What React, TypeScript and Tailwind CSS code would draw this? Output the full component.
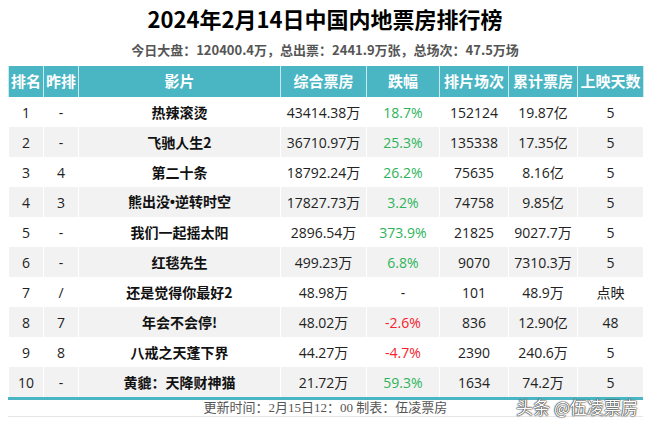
import React from "react";

const rows = [
  { rank: "1", prev: "-", name: "热辣滚烫", box: "43414.38万", change: "18.7%", up: true, shows: "152124", total: "19.87亿", days: "5" },
  { rank: "2", prev: "-", name: "飞驰人生2", box: "36710.97万", change: "25.3%", up: true, shows: "135338", total: "17.35亿", days: "5" },
  { rank: "3", prev: "4", name: "第二十条", box: "18792.24万", change: "26.2%", up: true, shows: "75635", total: "8.16亿", days: "5" },
  { rank: "4", prev: "3", name: "熊出没•逆转时空", box: "17827.73万", change: "3.2%", up: true, shows: "74758", total: "9.85亿", days: "5" },
  { rank: "5", prev: "-", name: "我们一起摇太阳", box: "2896.54万", change: "373.9%", up: true, shows: "21825", total: "9027.7万", days: "5" },
  { rank: "6", prev: "-", name: "红毯先生", box: "499.23万", change: "6.8%", up: true, shows: "9070", total: "7310.3万", days: "5" },
  { rank: "7", prev: "/", name: "还是觉得你最好2", box: "48.98万", change: "-", up: null, shows: "101", total: "48.9万", days: "点映" },
  { rank: "8", prev: "7", name: "年会不会停!", box: "48.02万", change: "-2.6%", up: false, shows: "836", total: "12.90亿", days: "48" },
  { rank: "9", prev: "8", name: "八戒之天蓬下界", box: "44.27万", change: "-4.7%", up: false, shows: "2390", total: "240.6万", days: "5" },
  { rank: "10", prev: "-", name: "黄貔：天降财神猫", box: "21.72万", change: "59.3%", up: true, shows: "1634", total: "74.2万", days: "5" },
];

const headers = ["排名", "昨排", "影片", "综合票房", "跌幅", "排片场次", "累计票房", "上映天数"];
const widths = ["w-[35px]", "w-[35px]", "w-[202px]", "w-[86px]", "w-[73px]", "w-[69px]", "w-[69px]", "w-[66px]"];

// the middle dot should be narrow, not the full-width CJK one
function FilmName({ name }: { name: string }) {
  const parts = name.split("•");
  if (parts.length === 1) return <>{name}</>;
  return (
    <>
      {parts[0]}
      <span className="font-['Liberation_Sans',sans-serif]">•</span>
      {parts[1]}
    </>
  );
}

export default function App() {
  return (
    <div className="relative w-[650px] h-[424px] overflow-hidden bg-white font-['Open_Sans','Noto_Sans_CJK_SC',sans-serif] text-[#222]">
      {/* Title */}
      <h1 className="pt-[5px] text-center text-[22px] font-bold leading-[26px] text-black font-['Noto_Sans_CJK_SC',sans-serif]">
        2024年2月14日中国内地票房排行榜
      </h1>
      <p className="mt-[11px] text-center text-[13px] font-bold leading-[16px] text-[#555] font-['Noto_Sans_CJK_SC',sans-serif]">
        今日大盘：120400.4万，总出票：2441.9万张，总场次：47.5万场
      </p>

      <div className="ml-[8px] mt-[8px] w-[635px]">
        <table className="w-full table-fixed border-collapse">
          <colgroup>
            {widths.map((w, i) => (
              <col key={i} className={w} />
            ))}
          </colgroup>
          <thead>
            <tr className="h-[31px] bg-[#4ab5c3] text-white">
              {headers.map((h) => (
                <th
                  key={h}
                  className="border-x border-[#c9eaee] p-0 text-center text-[15px] font-bold font-['Noto_Sans_CJK_SC',sans-serif]"
                >
                  {h}
                </th>
              ))}
            </tr>
          </thead>
          <tbody className="text-[14px]">
            {rows.map((r, i) => (
              <tr key={r.rank} className={i % 2 === 0 ? "h-[30px] bg-white" : "h-[30px] bg-[#f2f2f2]"}>
                <td className="border-x border-white p-0 text-center">{r.rank}</td>
                <td className="border-x border-white p-0 text-center">{r.prev}</td>
                <td className="border-x border-white p-0 text-center font-bold text-[#111] font-['Noto_Sans_CJK_SC',sans-serif]">
                  <FilmName name={r.name} />
                </td>
                <td className="border-x border-white p-0 text-center">{r.box}</td>
                <td
                  className={
                    r.up === null
                      ? "border-x border-white p-0 text-center"
                      : r.up
                      ? "border-x border-white p-0 text-center text-[#2cb45a]"
                      : "border-x border-white p-0 text-center text-[#f5222d]"
                  }
                >
                  {r.change}
                </td>
                <td className="border-x border-white p-0 text-center">{r.shows}</td>
                <td className="border-x border-white p-0 text-center">{r.total}</td>
                <td className="border-x border-white p-0 text-center">{r.days}</td>
              </tr>
            ))}
          </tbody>
        </table>
        <div className="h-[3px] bg-[#4ab5c3]" />
        <div className="h-[17px] border-b border-[#e6e6e6] text-center text-[13px] leading-[16px] text-[#555] font-['Liberation_Serif','Noto_Sans_CJK_SC',serif]">
          更新时间：2月15日12：00 制表：伍凌票房
        </div>
      </div>

      {/* watermark */}
      <div className="absolute right-[12px] bottom-[7px] text-[17px] leading-[20px] text-white font-['Noto_Sans_CJK_SC',sans-serif] [text-shadow:0_0_1px_#222,0_0_1px_#222,0_0_2px_#444]">
        头条 @伍凌票房
      </div>
    </div>
  );
}
